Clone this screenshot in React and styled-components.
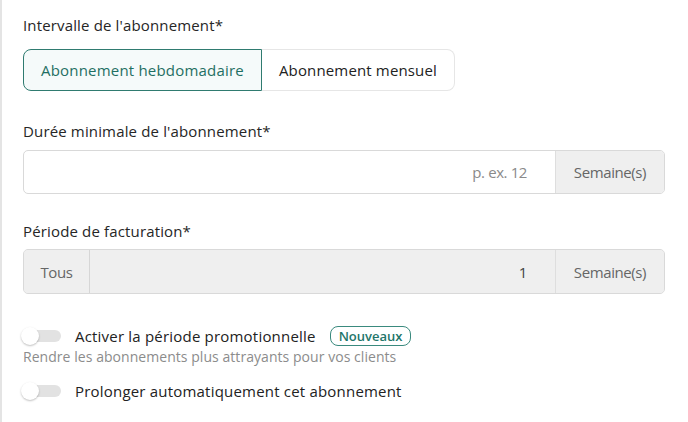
import React from "react";
import styled, { createGlobalStyle } from "styled-components";

const Global = createGlobalStyle`
  html, body { margin: 0; padding: 0; background: #fff; }
  body { font-family: "Open Sans", "Noto Sans", sans-serif; color: #333; }
  * { box-sizing: border-box; }
`;

const Page = styled.div`
  min-height: 422px;
  border-left: 2px solid #e4e4e4;
  padding: 15px 23px 0 21px;
  display: flex;
  flex-direction: column;
`;

const Label = styled.div`
  font-size: 15px;
  line-height: 20px;
  font-weight: 500;
  letter-spacing: 0.15px;
  color: #262626;
  margin-top: ${(p) => p.$mt || 0}px;
  margin-bottom: ${(p) => p.$mb || 9}px;
`;

const Segmented = styled.div`
  display: flex;
  align-self: flex-start;
  height: 42px;
`;

const Segment = styled.button`
  font-family: inherit;
  font-size: 15px;
  font-weight: 500;
  letter-spacing: ${(p) => (p.$active ? 0.2 : 0.15)}px;
  color: ${(p) => (p.$active ? "#1f6f63" : "#222")};
  background: ${(p) => (p.$active ? "#f5fafa" : "#fff")};
  border: 1px solid ${(p) => (p.$active ? "#2f7b70" : "#e6e6e6")};
  border-left-width: ${(p) => (p.$active ? 1 : 0)}px;
  border-radius: ${(p) => (p.$active ? "8px 0 0 8px" : "0 8px 8px 0")};
  padding: 0 ${(p) => (p.$active ? 17 : 17)}px;
  height: 100%;
  cursor: pointer;
`;

const InputGroup = styled.div`
  display: flex;
  height: ${(p) => p.$h || 44}px;
  border: 1px solid #d9d9d9;
  border-radius: 5px;
  overflow: hidden;
  background: ${(p) => (p.$disabled ? "#efefef" : "#fff")};
`;

const Addon = styled.div`
  display: flex;
  align-items: center;
  justify-content: center;
  width: ${(p) => p.$w}px;
  background: #efefef;
  color: #666;
  font-size: 15px;
  letter-spacing: -0.4px;
  ${(p) => (p.$side === "left" ? "border-right: 1px solid #d6d6d6;" : "border-left: 1px solid #dedede;")}
`;

const Field = styled.div`
  flex: 1;
  display: flex;
  align-items: center;
  justify-content: flex-end;
  padding-right: 28px;
  font-size: 15px;
  letter-spacing: -0.4px;
  color: ${(p) => (p.$placeholder ? "#8a8a8a" : "#444")};
`;

const ToggleRow = styled.div`
  display: flex;
  align-items: center;
  gap: 14px;
  height: 22px;
  margin-top: ${(p) => p.$mt || 0}px;
`;

const Switch = styled.div`
  position: relative;
  width: 40px;
  height: 18px;
  margin-left: -2px;
  flex: none;
  &::before {
    content: "";
    position: absolute;
    left: 4px;
    right: 0;
    top: 3px;
    height: 12px;
    border-radius: 6px;
    background: #e2e2e2;
  }
  &::after {
    content: "";
    position: absolute;
    left: 0;
    top: 0;
    width: 18px;
    height: 18px;
    border-radius: 50%;
    background: #fff;
    box-shadow: 0 1px 2px rgba(0, 0, 0, 0.25);
  }
`;

const ToggleText = styled.span`
  font-size: 15px;
  font-weight: 500;
  letter-spacing: 0.2px;
  color: #222;
`;

const Badge = styled.span`
  display: inline-flex;
  align-items: center;
  height: 20px;
  padding: 0 8px;
  border: 1.5px solid #3a8a7e;
  border-radius: 8px;
  color: #23766a;
  font-size: 13px;
  font-weight: 600;
`;

const Hint = styled.div`
  font-size: 14px;
  line-height: 20px;
  letter-spacing: 0.05px;
  color: #8c8c8c;
`;

export default function App() {
  return (
    <>
      <Global />
      <Page>
        <Label $mb={14}>Intervalle de l'abonnement*</Label>
        <Segmented>
          <Segment $active>Abonnement hebdomadaire</Segment>
          <Segment>Abonnement mensuel</Segment>
        </Segmented>
        <Label $mt={30} $mb={9}>Durée minimale de l'abonnement*</Label>
        <InputGroup>
          <Field $placeholder>p. ex. 12</Field>
          <Addon $w={109}>Semaine(s)</Addon>
        </InputGroup>
        <Label $mt={27} $mb={8}>Période de facturation*</Label>
        <InputGroup $disabled $h={45}>
          <Addon $w={66} $side="left">Tous</Addon>
          <Field>1</Field>
          <Addon $w={109}>Semaine(s)</Addon>
        </InputGroup>
        <ToggleRow $mt={31}>
          <Switch />
          <ToggleText>Activer la période promotionnelle</ToggleText>
          <Badge>Nouveaux</Badge>
        </ToggleRow>
        <Hint>Rendre les abonnements plus attrayants pour vos clients</Hint>
        <ToggleRow $mt={13}>
          <Switch />
          <ToggleText>Prolonger automatiquement cet abonnement</ToggleText>
        </ToggleRow>
      </Page>
    </>
  );
}
